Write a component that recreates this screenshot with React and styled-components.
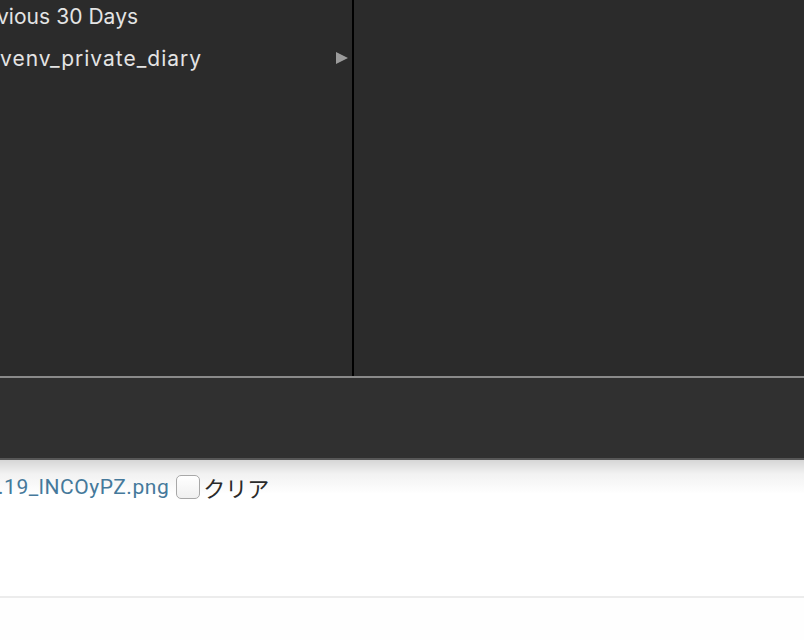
import React from "react";
import styled, { createGlobalStyle } from "styled-components";

const Global = createGlobalStyle`
  html, body { margin: 0; padding: 0; background: #ffffff; overflow: hidden; }
  * { box-sizing: border-box; }
`;

const Page = styled.div`
  width: 804px;
  height: 640px;
  display: flex;
  flex-direction: column;
  background: #fefefe;
`;

const Split = styled.div`
  display: flex;
  height: 376px;
  background: #2b2b2b;
`;

const Sidebar = styled.nav`
  width: 352px;
  overflow: hidden;
  display: flex;
  flex-direction: column;
  font-family: Inter, "Noto Sans", sans-serif;
  color: #e4e4e4;
  font-size: 21px;
`;

const SectionTitle = styled.div`
  height: 36px;
  line-height: 33px;
  margin-left: -36px;
  white-space: nowrap;
  letter-spacing: 0.05px;
`;

const Item = styled.div`
  display: flex;
  align-items: center;
  justify-content: space-between;
  height: 44px;
  padding-right: 4px;
  white-space: nowrap;
  letter-spacing: 1px;
`;

const Arrow = styled.span`
  width: 0;
  height: 0;
  border-top: 6.5px solid transparent;
  border-bottom: 6.5px solid transparent;
  border-left: 12px solid #9b9b9b;
`;

const Divider = styled.div`
  width: 2px;
  background: #000;
`;

const Main = styled.main`
  flex: 1;
  background: #2b2b2b;
`;

const Toolbar = styled.div`
  height: 84px;
  border-top: 2px solid #8a8a8a;
  border-bottom: 2px solid #575757;
  background: #303030;
`;

const Form = styled.section`
  height: 138px;
  padding: 12px 0 0 0;
  background: linear-gradient(#d6d6d6 0px, #f2f2f2 14px, #ffffff 34px);
  border-bottom: 2px solid #ececec;
`;

const FileRow = styled.div`
  display: flex;
  align-items: center;
  gap: 7px;
  font-family: Roboto, "Noto Sans CJK JP", sans-serif;
  font-size: 21px;
  line-height: 30px;
`;

const FileLink = styled.a`
  color: #45799b;
  text-decoration: none;
  margin-left: -2px;
  letter-spacing: 0.55px;
  white-space: nowrap;
`;

const Check = styled.span`
  width: 24px;
  height: 24px;
  border: 1px solid #a8a8a8;
  border-radius: 5px;
  background: linear-gradient(#ffffff, #f0f0f0);
`;

const Label = styled.span`
  color: #2a2a2a;
  font-family: "Noto Sans CJK JP", sans-serif;
  font-size: 22px;
  margin-left: -4px;
`;

export default function App() {
  return (
    <>
      <Global />
      <Page>
        <Split>
          <Sidebar>
            <SectionTitle>Previous 30 Days</SectionTitle>
            <Item>
              <span>venv_private_diary</span>
              <Arrow />
            </Item>
          </Sidebar>
          <Divider />
          <Main />
        </Split>
        <Toolbar />
        <Form>
          <FileRow>
            <FileLink href="#">.19_lNCOyPZ.png</FileLink>
            <Check />
            <Label>クリア</Label>
          </FileRow>
        </Form>
      </Page>
    </>
  );
}
